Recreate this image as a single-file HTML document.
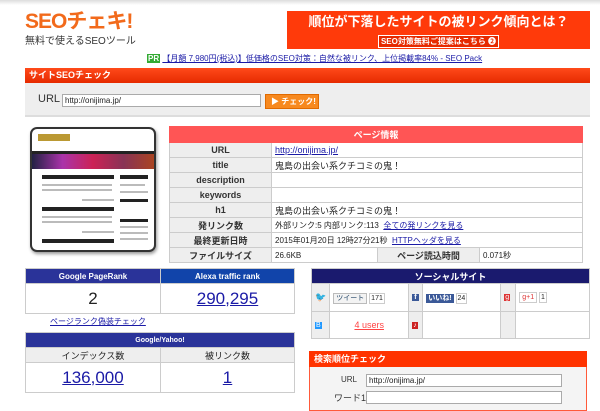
<!DOCTYPE html>
<html><head><meta charset="utf-8"><style>
*{margin:0;padding:0;box-sizing:border-box}
body{width:600px;height:400px;overflow:hidden;background:#fff;font-family:"Liberation Sans","Noto Sans CJK JP",sans-serif;position:relative;color:#222}
.a{position:absolute}
a{color:#1a1aa6;text-decoration:underline}
table{border-collapse:collapse;position:absolute;font-size:9px}
td{border:1px solid #ccc;height:15px;padding:0 3px}
.l{background:#eee;text-align:center;font-weight:bold;color:#333}
.g{position:absolute;height:2px;background:#bbb}
</style></head><body>
<div class="a" style="left:0;top:0;width:600px;height:5px;background:linear-gradient(#ddd,#fff)"></div>
<div class="a" style="left:25px;top:9px;font-size:21px;font-weight:bold;color:#f26a1b;letter-spacing:-1px;line-height:26px">SEOチェキ!</div>
<div class="a" style="left:25px;top:36px;font-size:10px;color:#333;line-height:12px">無料で使えるSEOツール</div>
<div class="a" style="left:287px;top:11px;width:303px;height:38px;background:#ff3a0a;color:#fff;text-align:center">
 <div style="font-size:13px;font-weight:bold;line-height:18px;margin-top:2px">順位が下落したサイトの被リンク傾向とは？</div>
 <div style="display:inline-block;margin-top:1px;width:121px;height:13px;border:1px solid #fff;background:#e62a00;font-size:8px;line-height:11px;font-weight:bold">SEO対策無料ご提案はこちら ➋</div>
</div>
<div class="a" style="left:147px;top:54px;font-size:8px;line-height:10px"><span style="background:#3a3;color:#fff;font-weight:bold;padding:0 1px">PR</span> <a href="#">【月額 7,980円(税込)】低価格のSEO対策：自然な被リンク、上位掲載率84% - SEO Pack</a></div>
<div class="a" style="left:25px;top:68px;width:565px;height:15px;background:linear-gradient(#ff4a1a,#e62a00);color:#fff;font-size:9px;font-weight:bold;line-height:15px;padding-left:4px">サイトSEOチェック</div>
<div class="a" style="left:25px;top:83px;width:565px;height:34px;background:#eee;border-bottom:2px solid #ddd"></div>
<div class="a" style="left:38px;top:93px;font-size:11px;line-height:13px;color:#333">URL</div>
<div class="a" style="left:62px;top:94px;width:199px;height:13px;border:1px solid #aaa;background:#fff;font-size:8px;line-height:11px;padding-left:2px">http://onijima.jp/</div>
<div class="a" style="left:265px;top:94px;width:54px;height:15px;background:#f7891f;border:1px solid #e06a00;color:#fff;font-size:8px;font-weight:bold;line-height:13px;padding-left:5px">▶ チェック!</div>
<div class="a" style="left:30px;top:127px;width:126px;height:125px;border:2px solid #333;border-radius:7px;background:#fff;box-shadow:1px 2px 3px #999;overflow:hidden">
 <div style="position:absolute;left:6px;top:5px;width:32px;height:7px;background:#b93"></div>
 <div style="position:absolute;left:0;top:22px;width:122px;height:3px;background:#222"></div>
 <div style="position:absolute;left:0;top:25px;width:122px;height:15px;background:linear-gradient(90deg,#224,#a3a,#c25,#835,#a42)"></div>
 <div style="position:absolute;left:10px;top:46px;width:72px;height:4px;background:#222"></div>
 <div style="position:absolute;left:88px;top:46px;width:28px;height:4px;background:#222"></div>
 <div class="g" style="left:10px;top:55px;width:70px"></div><div class="g" style="left:10px;top:60px;width:70px"></div><div class="g" style="left:50px;top:70px;width:32px"></div>
 <div class="g" style="left:88px;top:55px;width:25px"></div><div class="g" style="left:88px;top:62px;width:28px"></div>
 <div style="position:absolute;left:10px;top:78px;width:72px;height:4px;background:#222"></div>
 <div style="position:absolute;left:88px;top:70px;width:28px;height:3px;background:#222"></div>
 <div class="g" style="left:10px;top:87px;width:70px"></div><div class="g" style="left:10px;top:92px;width:70px"></div><div class="g" style="left:50px;top:102px;width:32px"></div>
 <div style="position:absolute;left:88px;top:90px;width:28px;height:3px;background:#222"></div>
 <div class="g" style="left:88px;top:97px;width:28px"></div><div class="g" style="left:88px;top:103px;width:28px"></div><div class="g" style="left:88px;top:109px;width:28px"></div>
 <div style="position:absolute;left:10px;top:110px;width:72px;height:4px;background:#222"></div>
</div>
<table style="left:169px;top:126px;width:414px">
<tr><td colspan="4" style="background:#f55;color:#fff;text-align:center;font-weight:bold;height:16px;border-color:#f55">ページ情報</td></tr>
<tr><td class="l" style="width:102px">URL</td><td colspan="3"><a href="#">http://onijima.jp/</a></td></tr>
<tr><td class="l">title</td><td colspan="3">鬼島の出会い系クチコミの鬼！</td></tr>
<tr><td class="l">description</td><td colspan="3"></td></tr>
<tr><td class="l">keywords</td><td colspan="3"></td></tr>
<tr><td class="l">h1</td><td colspan="3">鬼島の出会い系クチコミの鬼！</td></tr>
<tr><td class="l">発リンク数</td><td colspan="3" style="font-size:8px">外部リンク:5 内部リンク:113 &nbsp;<a href="#">全ての発リンクを見る</a></td></tr>
<tr><td class="l">最終更新日時</td><td colspan="3" style="font-size:8px">2015年01月20日 12時27分21秒 &nbsp;<a href="#">HTTPヘッダを見る</a></td></tr>
<tr><td class="l">ファイルサイズ</td><td style="width:106px;font-size:8px">26.6KB</td><td class="l" style="width:102px">ページ読込時間</td><td style="font-size:8px">0.071秒</td></tr>
</table>
<table style="left:25px;top:268px;width:270px">
<tr><td style="background:#2a3399;color:#fff;text-align:center;font-weight:bold;font-size:8px;width:135px">Google PageRank</td><td style="background:#1144aa;color:#fff;text-align:center;font-weight:bold;font-size:8px">Alexa traffic rank</td></tr>
<tr><td style="height:30px;text-align:center;font-size:17px">2</td><td style="text-align:center;font-size:17px"><a href="#">290,295</a></td></tr>
</table>
<div class="a" style="left:50px;top:316px;font-size:8px"><a href="#">ページランク偽装チェック</a></div>
<table style="left:25px;top:332px;width:270px">
<tr><td colspan="2" style="background:#2a3399;color:#fff;text-align:center;font-weight:bold;font-size:7px">Google/Yahoo!</td></tr>
<tr><td style="background:#eee;text-align:center;width:135px">インデックス数</td><td style="background:#eee;text-align:center">被リンク数</td></tr>
<tr><td style="height:30px;text-align:center;font-size:17px"><a href="#">136,000</a></td><td style="text-align:center;font-size:17px"><a href="#">1</a></td></tr>
</table>
<table style="left:311px;top:268px;width:279px;font-size:7px">
<tr><td colspan="6" style="background:#1a1a6e;color:#fff;text-align:center;font-weight:bold;font-size:9px">ソーシャルサイト</td></tr>
<tr style="height:28px"><td style="background:#eee;width:15px;color:#39f;font-size:9px">🐦</td><td style="width:79px"><span style="border:1px solid #bbb;background:#f3f3f3;padding:1px 2px;color:#246">ツイート</span> <span style="border:1px solid #ccc;padding:1px">171</span></td>
<td style="background:#eee;width:14px"><span style="background:#3b5998;color:#fff;padding:0 2px;font-weight:bold">f</span></td><td style="width:78px"><span style="background:#3b5998;color:#fff;padding:1px 2px;font-weight:bold">いいね!</span> <span style="border:1px solid #ccc;padding:1px">24</span></td>
<td style="background:#eee;width:15px"><span style="background:#d33;color:#fff;padding:0 1px">g</span></td><td><span style="border:1px solid #ccc;color:#d33;padding:1px 2px">g+1</span> <span style="border:1px solid #ccc;padding:1px">1</span></td></tr>
<tr style="height:27px"><td style="background:#eee"><span style="background:#29f;color:#fff;padding:0 1px">B</span></td><td style="text-align:center;font-size:9px"><a href="#" style="color:#f44">4 users</a></td><td style="background:#eee"><span style="background:#c22;color:#fff;padding:0 1px">♪</span></td><td></td><td style="background:#eee"></td><td></td></tr>
</table>
<div class="a" style="left:309px;top:351px;width:278px;height:60px;border:1px solid #ff5a3a;background:#f4f4f4"></div>
<div class="a" style="left:309px;top:351px;width:278px;height:16px;background:#ff3300;color:#fff;font-size:9px;font-weight:bold;line-height:16px;padding-left:5px">検索順位チェック</div>
<div class="a" style="left:341px;top:375px;font-size:8px;color:#333">URL</div>
<div class="a" style="left:366px;top:374px;width:196px;height:13px;border:1px solid #aaa;background:#fff;font-size:8px;line-height:11px;padding-left:2px">http://onijima.jp/</div>
<div class="a" style="left:334px;top:391px;font-size:9px;color:#333">ワード1</div>
<div class="a" style="left:366px;top:391px;width:196px;height:13px;border:1px solid #aaa;background:#fff"></div>
</body></html>
